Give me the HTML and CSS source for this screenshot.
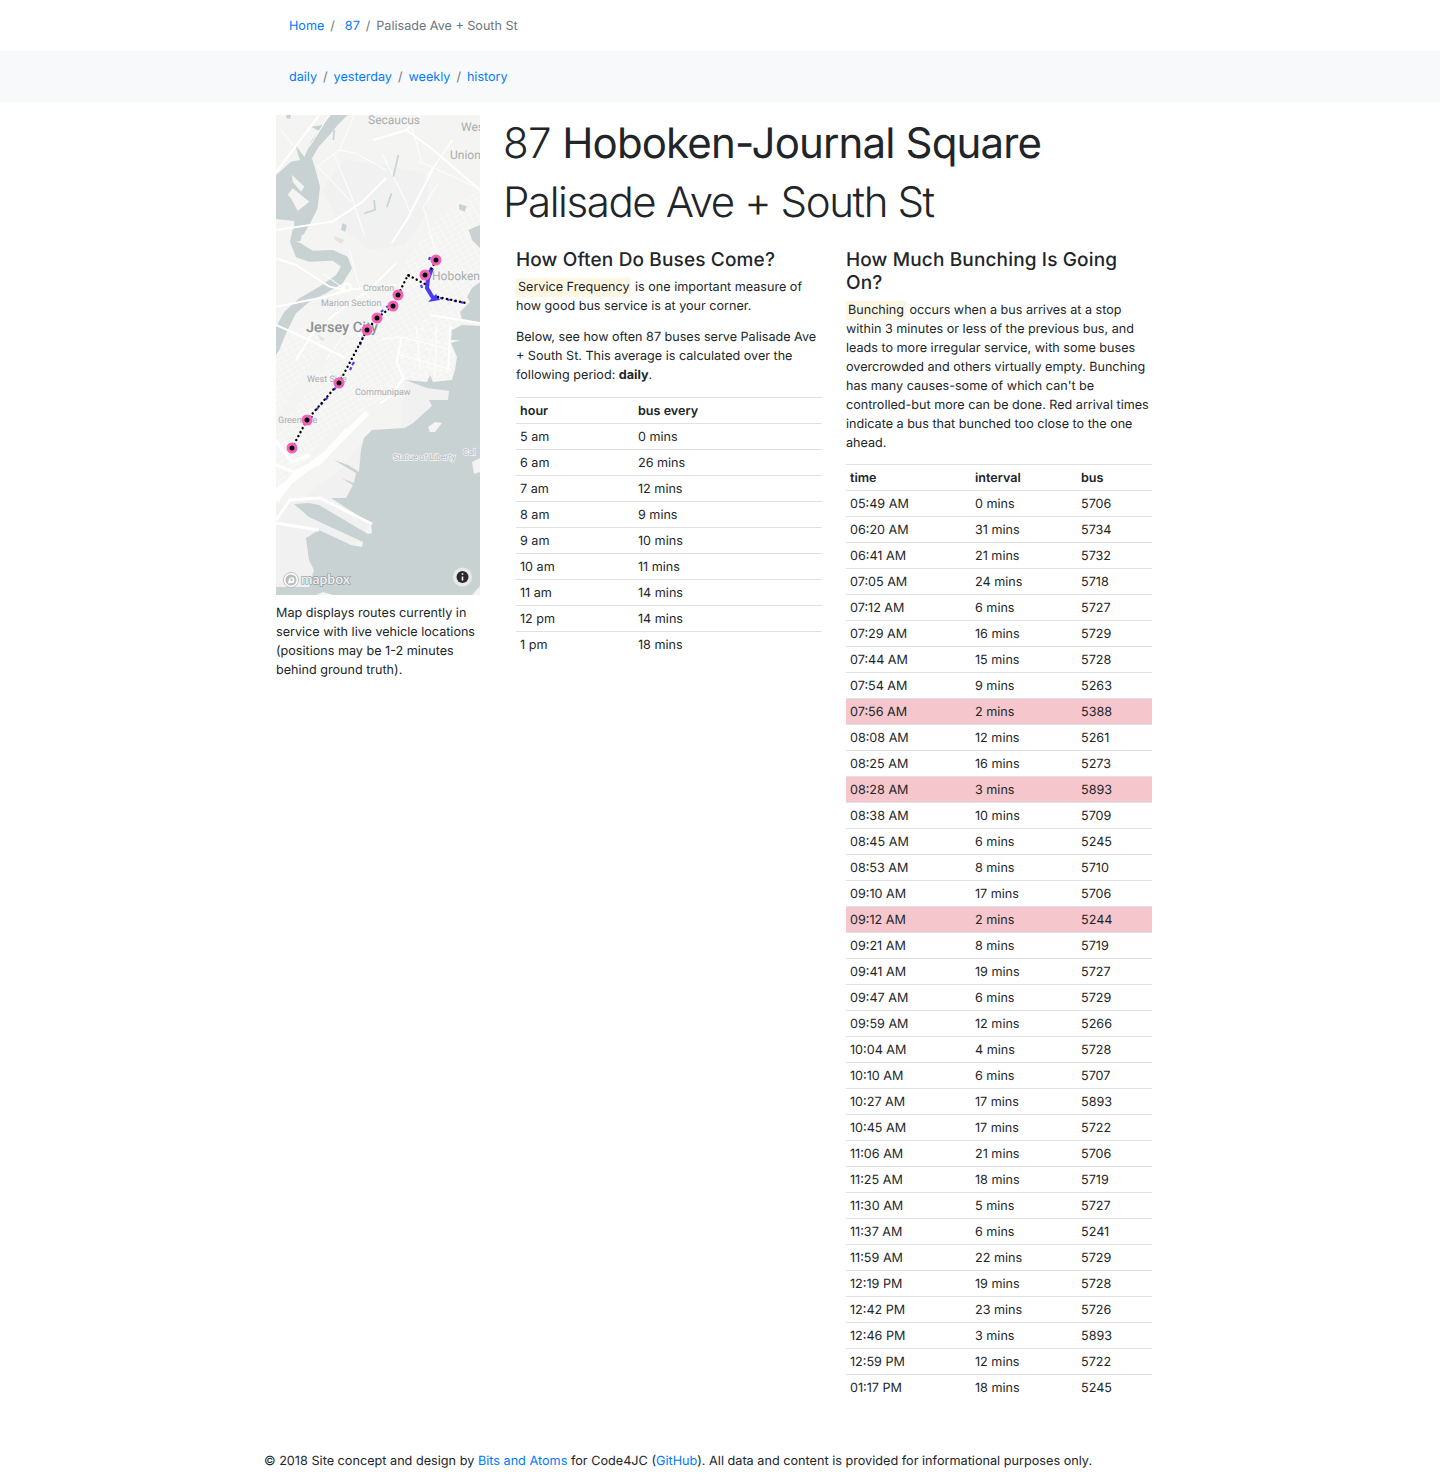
FILE: index.html
```html
<!DOCTYPE html>
<html lang="en">
<head>
<meta charset="utf-8">
<title>87 Hoboken-Journal Square - Palisade Ave + South St</title>
<link rel="stylesheet" href="styles.css">
</head>
<body>
<nav class="crumbs">
  <div class="wrap">
    <a href="#">Home</a><span class="sep sep-wide">/</span><a href="#">87</a><span class="sep">/</span><span class="current">Palisade Ave + South St</span>
  </div>
</nav>
<nav class="crumbs crumbs-alt">
  <div class="wrap">
    <a href="#">daily</a><span class="sep">/</span><a href="#">yesterday</a><span class="sep">/</span><a href="#">weekly</a><span class="sep">/</span><a href="#">history</a>
  </div>
</nav>
<main class="main">
  <aside class="side">
    <svg class="map" viewBox="276 115 204 480" width="204" height="480" role="img" aria-label="Map of route 87">
      <defs>
        <pattern id="grid" width="6.500" height="5" patternUnits="userSpaceOnUse" patternTransform="rotate(-30)">
          <path class="grid-line" d="M0 0H6.500M0 0V5"/>
        </pattern>
        <pattern id="grid-b" width="13" height="9" patternUnits="userSpaceOnUse" patternTransform="rotate(12)">
          <path class="grid-line-b" d="M0 0H13M0 0V9"/>
        </pattern>
      </defs>
      <rect class="land" x="276" y="115" width="204" height="480"/>
      <path class="park" d="M345 160L385 165L430 175L425 215L405 245L370 250L340 225L322 190Z"/>
      <path class="park" d="M405 382L449 392L447 400L429 400L432 406L405 428L372 430L340 470L300 500L276 505L276 590L320 590L372 520L400 440Z"/>

      <path fill="url(#grid)" d="M405 262L440 215L480 190L480 285L460 312L452 380L405 382L372 405L330 432L300 470L276 492L276 436L340 345L395 290Z"/>
      <path fill="url(#grid-b)" d="M420 320L452 322L450 378L402 378L400 345Z"/>
      <path fill="url(#grid)" d="M276 345L310 322L325 345L290 395L276 420Z"/>

      <path class="water" d="M480 326L462 325L452 330L451 340L460 340L451 343L457 357L455 370L452 380L433 382L430 375L427 382L405 380L427 388L449 391L448 400L429 400L432 406L413 423L405 428L372 430L364 438L361 450L359 472L348 465L334 460L356 473L354 483L341 478L353 485L346 498L331 498L371 524L372 533L368 534L319 505L309 503L294 504L309 517L363 542L362 547L351 545L319 530L306 538L309 560L314 570L309 587L276 587L276 595L480 595Z"/>
      <path class="water" d="M480 282L472 288L467 297L470 302L460 312L462 319L480 322ZM469 230L480 226L480 248L472 240Z"/>
      <path class="land" d="M428 427L435 422L442 423L435 432L430 432ZM472 462L480 458L480 472L474 474ZM316 595L323 592L333 595ZM472 595L480 586L480 595Z"/>

      <g transform="translate(276 115) scale(.3333)">
        <path class="water" d="M215 0L165 0L140 30L105 35L130 48L108 75L85 125L65 100L58 92L72 135L45 140L0 180L0 312L55 318L52 360L82 360L105 320L125 280L132 215L120 170L108 130L128 95L165 55L185 30Z"/>
        <path class="land" d="M35 240L50 220L100 260L65 288L45 250ZM48 180L85 215L75 230L50 200Z"/>
        <path class="water" d="M30 0L45 0L42 12L32 10ZM200 325L212 330L208 350L195 345Z"/>
        <path class="water-thin" d="M295 255L297 285L265 295M175 45L172 75"/>
        <path class="road" d="M130 0L0 172M0 345L170 320L260 260L330 190"/>
        <path class="road-thin" d="M125 155L190 105L240 115L330 165M125 155L170 200L225 260M175 120L225 240L265 360M190 105L235 0M15 45L50 90M160 0L100 95"/>
      </g>

      <g transform="translate(276 230) scale(.3333)">
        <path class="water" d="M50 -2L80 -2L73 38L110 62L170 60L215 80L228 115L200 160L150 190L100 215L60 250L30 310L10 360L0 375L0 290L25 245L70 205L130 170L180 135L195 110L170 92L100 95L60 82L42 35Z"/>
        <path class="land" d="M60 35L100 28L105 58L75 40Z"/>
        <path class="water-soft" d="M172 18L205 30L195 42L178 30ZM125 312L148 330L135 332Z"/>
        <path class="road" d="M0 85L60 105L160 170L210 180L360 165M0 230L150 200L215 180M0 285L100 330L210 385"/>
        <path class="road" d="M60 390L110 310L180 250L280 180L360 100"/>
        <circle class="road-node" cx="213" cy="172" r="11"/>
        <path class="road-thin" d="M140 130L210 180M220 60L250 170L330 260M150 390L230 280"/>
      </g>

      <g transform="translate(385 120) scale(.3333)">
        <path class="road" d="M65 30L145 90L285 210M-35 60L65 30L105 -15M145 145L65 300L20 370"/>
        <path class="road-thin" d="M80 20L110 125M200 60L145 145M100 125L150 145L270 200M115 260L160 190M115 260L150 390M-10 100L60 240L80 290M205 60L120 175"/>
        <path class="water-thin" d="M40 105L25 170M20 220L5 262"/>
        <path class="water" d="M222 252L245 258L240 275L222 268ZM250 330L285 315L285 365L265 355Z"/>
      </g>

      <g transform="translate(380 320) scale(.3333)">
        <path class="road" d="M65 50L50 130L70 175L30 230L0 250M150 -15L300 10M210 20L205 150"/>
        <path class="road-thin" d="M60 50L215 90M50 100L215 150M110 20L120 150M170 20L165 170M0 60L60 50"/>
      </g>

      <path class="road" d="M367 413L327 453L276 492"/>
      <path class="road" d="M348 430L319 462L296 473L276 500"/>
      <path class="road-thin" d="M276 441L292 462L310 455M276 520L290 500L320 498L372 524M276 523L319 530M276 465L296 473"/>

      <g class="labels">
        <text class="lbl lbl-12" x="368" y="124">Secaucus</text>
        <text class="lbl lbl-12" x="461" y="131">Wes</text>
        <text class="lbl lbl-12" x="450" y="159">Union</text>
        <text class="lbl lbl-12" x="432" y="280">Hoboken</text>
        <text class="lbl lbl-9" x="363" y="291">Croxton</text>
        <text class="lbl lbl-9" x="321" y="306">Marion Section</text>
        <text class="lbl lbl-14" x="306" y="332">Jersey City</text>
        <text class="lbl lbl-9" x="307" y="382">West Side</text>
        <text class="lbl lbl-9" x="355" y="395">Communipaw</text>
        <text class="lbl lbl-9" x="278" y="423">Greenville</text>
        <text class="lbl lbl-8" x="393" y="460">Statue of Liberty</text>
        <text class="lbl lbl-8" x="463" y="455">Cal</text>
      </g>

      <g class="route">
        <path class="route-blue-wide" d="M432 268L428 279L427 288L433 298"/>
        <path class="route-blue-tip" d="M428 302L436 294L440 300Z"/>
        <path class="route-blue" d="M430 257L428 263M407 275L412 277M421 285L423 290M440 298L465 303M350 370L354 362M309 425L312 416M334 390L338 384M316 410L328 397M352 365L356 360M381 312L388 306M360 345L363 337"/>
        <path class="route-dots" d="M292 448L307 420L339 383L367 330L377 318L393 306L398 295L408 275L425 284M425 275L432 268L436 260M438 297L466 303"/>
      </g>
      <g class="stops">
        <circle cx="436" cy="260" r="4"/><circle cx="425" cy="275" r="4"/><circle cx="398" cy="295" r="4"/><circle cx="393" cy="306" r="4"/><circle cx="377" cy="318" r="4"/><circle cx="367" cy="330" r="4"/><circle cx="339" cy="383" r="4"/><circle cx="307" cy="420" r="4"/><circle cx="292" cy="448" r="4"/>
      </g>

      <g class="mb-logo">
        <circle class="mb-ring" cx="291" cy="580" r="7.500"/>
        <circle class="mb-core" cx="291" cy="580" r="5.500"/>
        <path class="mb-mark" d="M288 583.500L288.700 579.800A2.900 2.900 0 1 1 291.600 583Z"/>
        <circle class="mb-hole" cx="291.500" cy="579.800" r="1.200"/>
        <text class="mb-text" x="301" y="584" textLength="49" lengthAdjust="spacingAndGlyphs">mapbox</text>
      </g>
      <circle class="info-bg" cx="462.500" cy="577" r="9.500"/>
      <circle class="info-dot" cx="462.500" cy="577" r="6"/>
      <path class="info-i" d="M462.500 576.500V580.500M462.500 573.200V574.800"/>
    </svg>
    <p class="caption">Map displays routes currently in service with live vehicle locations (positions may be 1-2 minutes behind ground truth).</p>
  </aside>

  <section class="content">
    <h1 class="title"><span class="num">87</span> <span class="route-name">Hoboken-Journal Square</span></h1>
    <h1 class="title title-light">Palisade Ave + South St</h1>
    <div class="cols">
      <div class="col">
        <h2>How Often Do Buses Come?</h2>
        <p><mark>Service Frequency</mark> is one important measure of how good bus service is at your corner.</p>
        <p>Below, see how often 87 buses serve Palisade Ave + South St. This average is calculated over the following period: <strong>daily</strong>.</p>
        <table class="tbl tbl-hours">
          <colgroup><col class="c-hour"><col></colgroup>
          <thead><tr><th>hour</th><th>bus every</th></tr></thead>
          <tbody>
            <tr><td>5 am</td><td>0 mins</td></tr>
            <tr><td>6 am</td><td>26 mins</td></tr>
            <tr><td>7 am</td><td>12 mins</td></tr>
            <tr><td>8 am</td><td>9 mins</td></tr>
            <tr><td>9 am</td><td>10 mins</td></tr>
            <tr><td>10 am</td><td>11 mins</td></tr>
            <tr><td>11 am</td><td>14 mins</td></tr>
            <tr><td>12 pm</td><td>14 mins</td></tr>
            <tr><td>1 pm</td><td>18 mins</td></tr>
          </tbody>
        </table>
      </div>
      <div class="col">
        <h2>How Much Bunching Is Going On?</h2>
        <p><mark>Bunching</mark> occurs when a bus arrives at a stop within 3 minutes or less of the previous bus, and leads to more irregular service, with some buses overcrowded and others virtually empty. Bunching has many causes-some of which can't be controlled-but more can be done. Red arrival times indicate a bus that bunched too close to the one ahead.</p>
        <table class="tbl tbl-arrivals">
          <colgroup><col class="c-time"><col class="c-int"><col></colgroup>
          <thead><tr><th>time</th><th>interval</th><th>bus</th></tr></thead>
          <tbody>
            <tr><td>05:49 AM</td><td>0 mins</td><td>5706</td></tr>
            <tr><td>06:20 AM</td><td>31 mins</td><td>5734</td></tr>
            <tr><td>06:41 AM</td><td>21 mins</td><td>5732</td></tr>
            <tr><td>07:05 AM</td><td>24 mins</td><td>5718</td></tr>
            <tr><td>07:12 AM</td><td>6 mins</td><td>5727</td></tr>
            <tr><td>07:29 AM</td><td>16 mins</td><td>5729</td></tr>
            <tr><td>07:44 AM</td><td>15 mins</td><td>5728</td></tr>
            <tr><td>07:54 AM</td><td>9 mins</td><td>5263</td></tr>
            <tr class="bunched"><td>07:56 AM</td><td>2 mins</td><td>5388</td></tr>
            <tr><td>08:08 AM</td><td>12 mins</td><td>5261</td></tr>
            <tr><td>08:25 AM</td><td>16 mins</td><td>5273</td></tr>
            <tr class="bunched"><td>08:28 AM</td><td>3 mins</td><td>5893</td></tr>
            <tr><td>08:38 AM</td><td>10 mins</td><td>5709</td></tr>
            <tr><td>08:45 AM</td><td>6 mins</td><td>5245</td></tr>
            <tr><td>08:53 AM</td><td>8 mins</td><td>5710</td></tr>
            <tr><td>09:10 AM</td><td>17 mins</td><td>5706</td></tr>
            <tr class="bunched"><td>09:12 AM</td><td>2 mins</td><td>5244</td></tr>
            <tr><td>09:21 AM</td><td>8 mins</td><td>5719</td></tr>
            <tr><td>09:41 AM</td><td>19 mins</td><td>5727</td></tr>
            <tr><td>09:47 AM</td><td>6 mins</td><td>5729</td></tr>
            <tr><td>09:59 AM</td><td>12 mins</td><td>5266</td></tr>
            <tr><td>10:04 AM</td><td>4 mins</td><td>5728</td></tr>
            <tr><td>10:10 AM</td><td>6 mins</td><td>5707</td></tr>
            <tr><td>10:27 AM</td><td>17 mins</td><td>5893</td></tr>
            <tr><td>10:45 AM</td><td>17 mins</td><td>5722</td></tr>
            <tr><td>11:06 AM</td><td>21 mins</td><td>5706</td></tr>
            <tr><td>11:25 AM</td><td>18 mins</td><td>5719</td></tr>
            <tr><td>11:30 AM</td><td>5 mins</td><td>5727</td></tr>
            <tr><td>11:37 AM</td><td>6 mins</td><td>5241</td></tr>
            <tr><td>11:59 AM</td><td>22 mins</td><td>5729</td></tr>
            <tr><td>12:19 PM</td><td>19 mins</td><td>5728</td></tr>
            <tr><td>12:42 PM</td><td>23 mins</td><td>5726</td></tr>
            <tr><td>12:46 PM</td><td>3 mins</td><td>5893</td></tr>
            <tr><td>12:59 PM</td><td>12 mins</td><td>5722</td></tr>
            <tr><td>01:17 PM</td><td>18 mins</td><td>5245</td></tr>
          </tbody>
        </table>
      </div>
    </div>
  </section>
</main>
<footer class="footer">
  <p>© 2018 Site concept and design by <a href="#">Bits and Atoms</a> for Code4JC (<a href="#">GitHub</a>). All data and content is provided for informational purposes only.</p>
</footer>
</body>
</html>
```
FILE: styles.css
```css
* { box-sizing: border-box; }
html, body { margin: 0; padding: 0; }
body {
  font-family: Inter, "Liberation Sans", sans-serif;
  font-size: 12.6px;
  line-height: 19px;
  color: #212529;
  background: #fff;
  text-rendering: geometricPrecision;
}
a { color: #007bff; text-decoration: none; }

.crumbs { height: 51px; display: flex; align-items: center; padding-top: 2px; }
.crumbs-alt { background: #f8f9fa; }
.wrap { width: 862px; margin-left: 289px; }
.sep { color: #6c757d; padding: 0 6px; }
.sep-wide { padding: 0 10px 0 6px; }
.current { color: #6c757d; }

.main {
  width: 912px;
  margin: 0 auto;
  display: grid;
  grid-template-columns: 228px 684px;
  padding-top: 13px;
}
.side { padding: 0 12px; }
.map { display: block; }
.caption { margin: 9px 0 0; }
.content { padding: 0 12px; margin-top: -1px; }

.title {
  margin: 0 0 0 -1px;
  font-size: 42px;
  font-weight: 300;
  line-height: 59px;
  height: 59px;
  letter-spacing: -0.6px;
  white-space: nowrap;
}
.title-light { font-weight: 300; letter-spacing: -1.4px; }
.num { font-weight: 300; }
.route-name { font-weight: 400; letter-spacing: -0.85px; }

.cols {
  display: grid;
  grid-template-columns: 330px 330px;
  padding-top: 16px;
}
.col { padding: 0 12px; }
h2 {
  margin: 0 0 7px;
  font-size: 19px;
  font-weight: 500;
  line-height: 23px;
  letter-spacing: .15px;
}
p { margin: 0 0 12px; }
mark { background: #fdf6e3; color: inherit; padding: 2px; }

.tbl { width: 100%; border-collapse: collapse; table-layout: fixed; }
.tbl th, .tbl td {
  height: 26px;
  padding: 2px 4px 0;
  text-align: left;
  border-top: 1px solid #dee2e6;
  line-height: 19px;
}
.tbl th { font-weight: 600; }
.tbl-arrivals { margin-top: -1px; }
.c-hour { width: 118px; }
.c-time { width: 125px; }
.c-int { width: 106px; }
.bunched td { background: #f5c6cb; }

.footer { margin: 51px 0 0 264px; font-size: 12.68px; }
.footer p { margin: 0; }

/* Map */
.land { fill: #f4f4f3; }
.park { fill: #f0f1f0; }
.water { fill: #c9d2d3; }
.water-soft { fill: #dfe3e3; }
.water-thin { fill: none; stroke: #c9d2d3; stroke-width: 5; }
.road { fill: none; stroke: #fff; stroke-width: 6; }
.road-thin { fill: none; stroke: #fff; stroke-width: 3; }
.road-node { fill: #f4f4f3; stroke: #fff; stroke-width: 7; }
.grid-line { fill: none; stroke: #fff; stroke-width: .8; }
.grid-line-b { fill: none; stroke: #fff; stroke-width: .8; }
.lbl {
  font-family: Roboto, sans-serif;
  fill: #a9adae;
  stroke: #f5f5f4;
  stroke-width: 1.5px;
  paint-order: stroke;
}
.lbl-14 { font-size: 14.500px; font-weight: 500; fill: #8d9192; }
.lbl-12 { font-size: 12px; }
.lbl-9 { font-size: 9px; }
.lbl-8 { font-size: 8.500px; fill: #b0b4b5; }
.route-dots { fill: none; stroke: #000; stroke-width: 2.400; stroke-dasharray: .1 4.400; stroke-linecap: round; }
.route-blue { fill: none; stroke: #4a3df5; stroke-width: 2.200; stroke-dasharray: 3 4; }
.route-blue-wide { fill: none; stroke: #4a3df5; stroke-width: 4; }
.route-blue-tip { fill: #4a3df5; }
.stops circle { fill: #000; stroke: #f462b8; stroke-width: 3; }
.mb-ring { fill: #fff; stroke: #9a9ea0; stroke-width: .6; }
.mb-core { fill: #b8bcbd; }
.mb-mark { fill: #fff; }
.mb-hole { fill: #b8bcbd; }
.mb-text {
  font-family: Lato, sans-serif;
  font-size: 14px;
  font-weight: 700;
  fill: #eceeee;
  stroke: #8f9495;
  stroke-width: 1.200px;
  paint-order: stroke;
}
.info-bg { fill: #e8eaea; }
.info-dot { fill: #2b2b2b; }
.info-i { fill: none; stroke: #fff; stroke-width: 1.600; }
```
